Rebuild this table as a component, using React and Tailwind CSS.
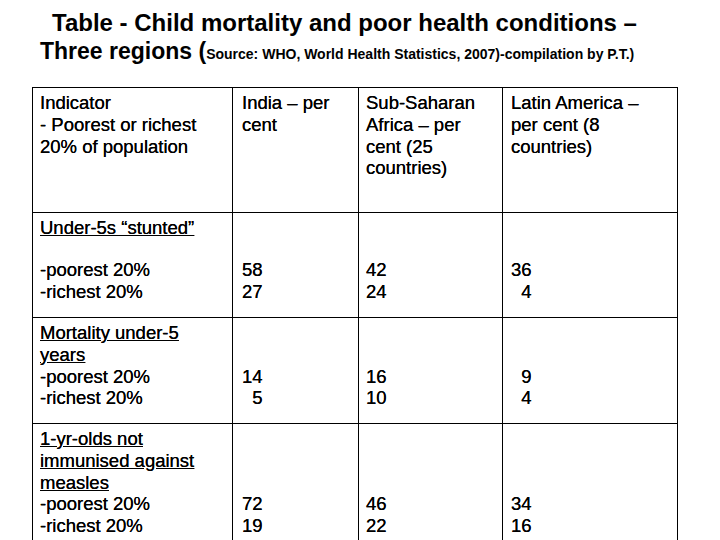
const rows = [
  {
    label: ["Under-5s \u201cstunted\u201d"],
    gap: true,
    values: [
      ["58", "27"],
      ["42", "24"],
      ["36", "  4"],
    ],
    h: "h-[105px]",
  },
  {
    label: ["Mortality under-5", "years"],
    values: [
      ["14", "  5"],
      ["16", "10"],
      ["  9", "  4"],
    ],
    h: "h-[106px]",
  },
  {
    label: ["1-yr-olds not", "immunised against", "measles"],
    values: [
      ["72", "19"],
      ["46", "22"],
      ["34", "16"],
    ],
    h: "h-[120px]",
  },
];

function Cell({ children, className = "" }) {
  return (
    <td className={"border border-black align-top pt-[4px] pl-[7px] pr-2 " + className}>
      {children}
    </td>
  );
}

export default function App() {
  return (
    <div
      className="w-[720px] h-[540px] overflow-hidden bg-white text-black"
      style={{ fontFamily: '"Liberation Sans", Arial, sans-serif' }}
    >
      <div className="pt-[9px] font-bold leading-[28px]">
        <div className="pl-[52px] text-[24px]">
          Table - Child mortality and poor health conditions –
        </div>
        <div className="pl-[40px] text-[23px] whitespace-nowrap">
          Three regions (
          <span className="text-[14px]">
            Source: WHO, World Health Statistics, 2007)-compilation by P.T.)
          </span>
        </div>
      </div>

      <table className="mt-[19px] ml-[32px] border-collapse text-[18.5px] leading-[21.75px] table-fixed [text-shadow:0_0_0.3px_#000]">
        <colgroup>
          <col className="w-[200px]" />
          <col className="w-[126px]" />
          <col className="w-[144px]" />
          <col className="w-[175px]" />
        </colgroup>
        <tbody>
          <tr className="h-[125px]">
            <Cell>
              Indicator
              <br />- Poorest or richest
              <br />
              20% of population
            </Cell>
            <Cell className="pl-[9px]">
              India – per
              <br />
              cent
            </Cell>
            <Cell className="pl-[6px]">
              Sub-Saharan
              <br />
              Africa – per
              <br />
              cent (25
              <br />
              countries)
            </Cell>
            <Cell className="pl-[8px]">
              Latin America –
              <br />
              per cent (8
              <br />
              countries)
            </Cell>
          </tr>
          {rows.map((r, i) => (
            <tr key={i} className={r.h}>
              <Cell>
                {r.label.map((l, j) => (
                  <div key={j} className="underline">
                    {l}
                  </div>
                ))}
                {r.gap && <div className="h-[20px]"></div>}
                <div>-poorest 20%</div>
                <div>-richest 20%</div>
              </Cell>
              {r.values.map((v, k) => (
                <Cell key={k} className={k === 0 ? "pl-[9px]" : k === 1 ? "pl-[6px]" : "pl-[8px]"}>
                  {r.label.map((_, j) => (
                    <div key={j}>&nbsp;</div>
                  ))}
                  {r.gap && <div className="h-[20px]"></div>}
                  <div className="whitespace-pre">{v[0]}</div>
                  <div className="whitespace-pre">{v[1]}</div>
                </Cell>
              ))}
            </tr>
          ))}
        </tbody>
      </table>
    </div>
  );
}
